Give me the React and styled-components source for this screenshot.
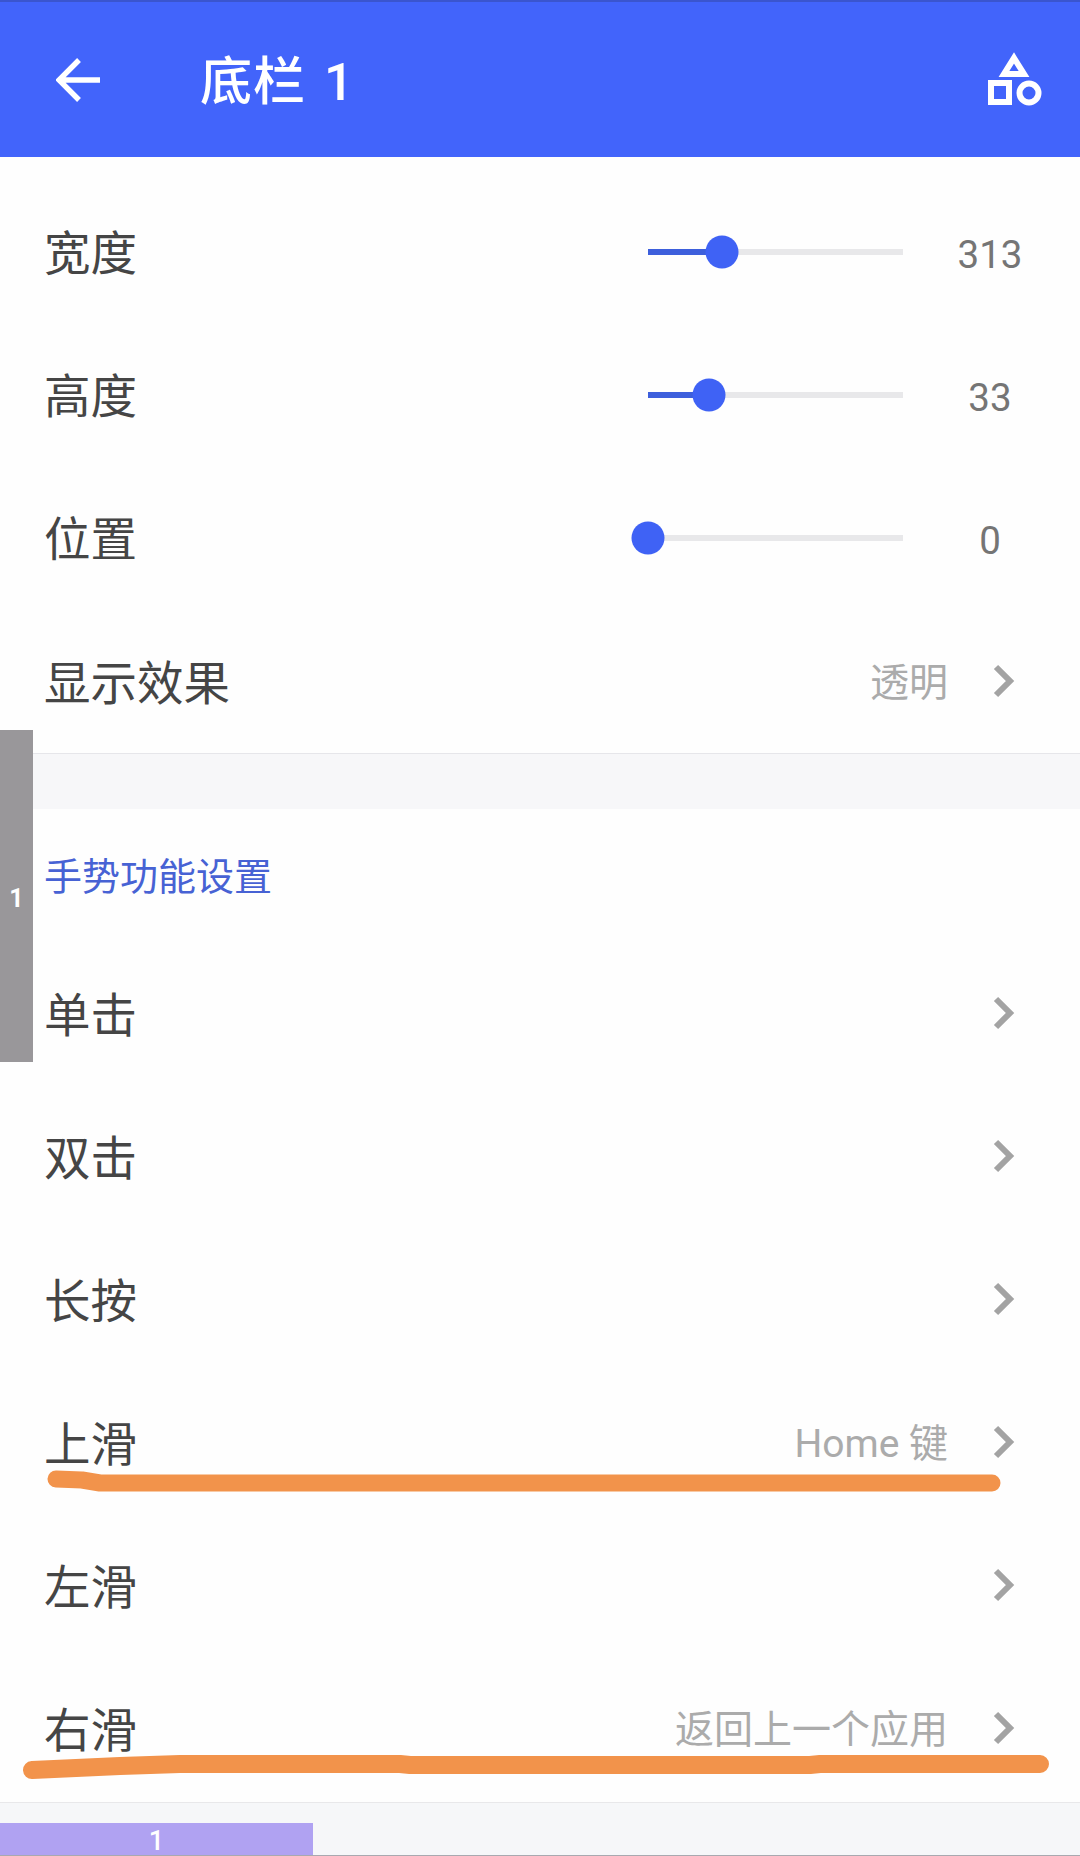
import React from 'react';
import styled, { createGlobalStyle } from 'styled-components';

const GlobalStyle = createGlobalStyle`
  html, body {
    margin: 0;
    padding: 0;
    background: #fff;
  }
  * { box-sizing: border-box; }
`;

const Page = styled.div`
  position: relative;
  width: 1080px;
  height: 1856px;
  overflow: hidden;
  background: #fefefe;
  font-family: Roboto, "Noto Sans CJK SC", sans-serif;
`;

const Toolbar = styled.header`
  height: 157px;
  display: flex;
  align-items: center;
  padding: 0 36px 0 56px;
  background: #4264fb;
  border-top: 2px solid #3a55cf;
  color: #fff;
`;

const ToolbarTitle = styled.h1`
  flex: 1;
  margin: 7px 0 0 98px;
  font-size: 52px;
  font-weight: 500;
  line-height: 1;
  letter-spacing: 1px;
  word-spacing: 4px;
`;

const Rows = styled.section`
  padding-top: ${p => p.$top || 0}px;
`;

const Row = styled.div`
  height: 143px;
  display: flex;
  align-items: center;
  padding-left: 44px;
  padding-right: ${p => (p.$slider ? 30 : 64)}px;
  padding-top: ${p => p.$nudge || 0}px;
`;

const Label = styled.span`
  flex: 1;
  font-size: 46.5px;
  line-height: 1;
  color: #454545;
  padding-top: ${p => (p.$low ? 4 : 1)}px;
`;

const Track = styled.div`
  position: relative;
  width: 255px;
  height: 6px;
  margin-bottom: 1px;
  background: #e8e8ea;
`;

const TrackFill = styled.div`
  height: 100%;
  background: #3d5fdc;
`;

const Thumb = styled.div`
  position: absolute;
  top: 50%;
  width: 33px;
  height: 33px;
  border-radius: 50%;
  background: #3f62f5;
  transform: translate(-50%, -50%);
`;

const SliderValue = styled.span`
  width: 120px;
  margin-left: 27px;
  text-align: center;
  font-size: 38.5px;
  line-height: 1;
  padding-top: 6px;
  color: #757575;
`;

const Trail = styled.span`
  margin-right: 44px;
  font-size: 39px;
  line-height: 1;
  color: #ababab;
`;

const ChevronBox = styled.svg`
  margin-bottom: 5px;
  flex-shrink: 0;
`;

const Gap = styled.div`
  height: 56px;
  background: #f7f7f9;
  border-top: 1px solid #e6e6ea;
`;

const SectionTitle = styled.h2`
  height: 135px;
  margin: 0;
  padding: 0 0 7px 44px;
  display: flex;
  align-items: center;
  font-size: 38px;
  font-weight: 400;
  color: #4762d4;
`;

const Footer = styled.footer`
  height: 54px;
  padding-top: 20px;
  background: #f6f7f9;
  border-top: 1px solid #e8e8ea;
  border-bottom: 1px solid #a9a9b0;
`;

const FooterTab = styled.div`
  width: 313px;
  height: 32px;
  display: flex;
  justify-content: center;
  align-items: flex-end;
  background: #b0a2f2;
  color: #fff;
  font-size: 27px;
  font-weight: 500;
  line-height: 1;
`;

const SideTab = styled.div`
  position: absolute;
  left: 0;
  top: 730px;
  width: 33px;
  height: 332px;
  display: flex;
  align-items: center;
  justify-content: center;
  padding-top: 4px;
  background: #99979a;
  color: #fff;
  font-size: 25px;
  font-weight: 700;
`;

const Scribbles = styled.svg`
  position: absolute;
  left: 0;
  top: 0;
  pointer-events: none;
`;

const Chevron = () => (
  <ChevronBox width="24" height="34" viewBox="0 0 24 34" fill="none">
    <path d="M4 3 L18 17 L4 31" stroke="#a3a3a3" strokeWidth="6" />
  </ChevronBox>
);

const BackArrow = () => (
  <svg width="46" height="46" viewBox="0 0 46 46" fill="none">
    <path d="M44 23 H4 M23 3 L3 23 L23 43" stroke="#fff" strokeWidth="5.4" />
  </svg>
);

const ShapesIcon = () => (
  <svg width="56" height="58" viewBox="0 0 56 58" fill="none" stroke="#fff" strokeWidth="6">
    <path d="M26 7 L36 23 H16 Z" />
    <rect x="3" y="32" width="18" height="19" />
    <circle cx="41" cy="42" r="9.5" />
  </svg>
);

const sliders = [
  { label: '宽度', value: 313, pct: 29 },
  { label: '高度', value: 33, pct: 24 },
  { label: '位置', value: 0, pct: 0 },
];

const gestures = [
  { label: '单击' },
  { label: '双击' },
  { label: '长按' },
  { label: '上滑', trail: 'Home 键' },
  { label: '左滑' },
  { label: '右滑', trail: '返回上一个应用' },
];

export default function App() {
  return (
    <Page>
      <GlobalStyle />
      <Toolbar>
        <BackArrow />
        <ToolbarTitle>底栏 1</ToolbarTitle>
        <ShapesIcon />
      </Toolbar>

      <Rows $top={24}>
        {sliders.map(s => (
          <Row $slider key={s.label}>
            <Label $low>{s.label}</Label>
            <Track>
              <TrackFill style={{ width: `${s.pct}%` }} />
              <Thumb style={{ left: `${s.pct}%` }} />
            </Track>
            <SliderValue>{s.value}</SliderValue>
          </Row>
        ))}
        <Row $nudge={4}>
          <Label>显示效果</Label>
          <Trail>透明</Trail>
          <Chevron />
        </Row>
      </Rows>

      <Gap />

      <SectionTitle>手势功能设置</SectionTitle>
      <Rows>
        {gestures.map(g => (
          <Row key={g.label}>
            <Label>{g.label}</Label>
            {g.trail && <Trail>{g.trail}</Trail>}
            <Chevron />
          </Row>
        ))}
      </Rows>

      <Footer>
        <FooterTab>1</FooterTab>
      </Footer>

      <SideTab>1</SideTab>

      <Scribbles width="1080" height="1856" fill="none" stroke="#f2934b" strokeLinecap="round">
        <path d="M56 1479 L82 1480 L100 1483 H992" strokeWidth="17" strokeLinejoin="round" />
        <path d="M32 1770 L120 1766 L180 1764 H400 L410 1765 H810 L820 1764 H1040" strokeWidth="18" strokeLinejoin="round" />
      </Scribbles>
    </Page>
  );
}
